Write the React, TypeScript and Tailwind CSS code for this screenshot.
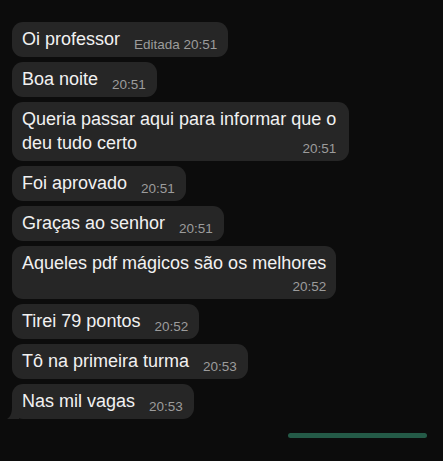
const font = { fontFamily: '"Liberation Sans", Arial, sans-serif' }

const messages = [
  { text: "Oi professor", time: "Editada 20:51" },
  { text: "Boa noite", time: "20:51" },
  { text: "Queria passar aqui para informar que o", second: "deu tudo certo", time: "20:51" },
  { text: "Foi aprovado", time: "20:51" },
  { text: "Graças ao senhor", time: "20:51" },
  { text: "Aqueles pdf mágicos são os melhores", time: "20:52", below: true },
  { text: "Tirei 79 pontos", time: "20:52" },
  { text: "Tô na primeira turma", time: "20:53" },
  { text: "Nas mil vagas", time: "20:53", tail: true },
]

const Time = (props: { children: string }) => {
  return (
    <span className="relative top-[4px] ml-[14px] whitespace-nowrap text-[13.5px] leading-none text-[#9c9c9c]">
      {props.children}
    </span>
  )
}

const Bubble = (props: { text: string, second?: string, time: string, below?: boolean, tail?: boolean }) => {
  if (props.second) {
    return (
      <div className="self-start rounded-[11px] bg-[#262626] pl-[10px] pr-[13px] pt-[5px] pb-[6px] text-[18px] leading-6 text-[#f1f1f1]">
        <div>{props.text}</div>
        <div className="flex items-baseline justify-between">
          <span>{props.second}</span>
          <Time>{props.time}</Time>
        </div>
      </div>
    )
  }

  if (props.below) {
    return (
      <div className="self-start rounded-[11px] bg-[#262626] pl-[10px] pr-[10px] pt-[5px] pb-[4px] text-[18px] leading-6 text-[#f1f1f1]">
        <div>{props.text}</div>
        <div className="mt-1 text-right text-[13.5px] leading-4 text-[#9c9c9c]">{props.time}</div>
      </div>
    )
  }

  return (
    <div className="relative self-start rounded-[11px] bg-[#262626] pl-[10px] pr-[11px] pt-[5px] pb-[6px] text-[18px] leading-6 text-[#f1f1f1]">
      <span>{props.text}</span>
      <Time>{props.time}</Time>
      {props.tail && (
        <svg className="absolute -left-[7px] bottom-0" width="14" height="12" viewBox="0 0 14 12">
          <path d="M14 0 L14 12 L2 12 C5 10 7 7 7 0 Z" fill="#262626" />
        </svg>
      )}
    </div>
  )
}

export default function App() {
  return (
    <div className="h-[461px] w-[443px] overflow-hidden bg-[#0c0c0c] antialiased" style={font}>
      <div className="flex flex-col gap-[5px] pl-[12px] pt-[22px]">
        {messages.map((m, i) => (
          <Bubble key={i} {...m} />
        ))}
      </div>
      <div className="mt-[14px] flex justify-end pr-[16px]">
        <div className="h-[5px] w-[139px] rounded-full bg-[#245a47]"></div>
      </div>
    </div>
  )
}
